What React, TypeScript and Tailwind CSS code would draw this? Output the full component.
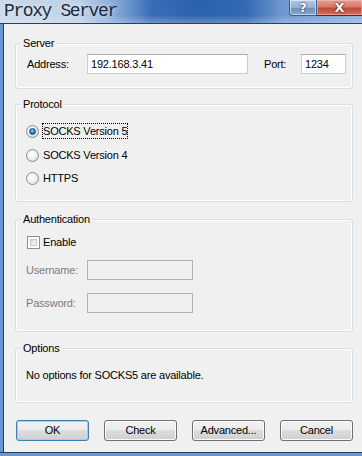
import React from "react";

const font = "font-['Liberation_Sans',Arial,sans-serif] text-[11px] tracking-[-0.2px]";

function Group({ title, className, children }: { title: string; className?: string; children: React.ReactNode }) {
  return (
    <div className={`relative rounded-[3px] border border-[#d5dfe5] shadow-[inset_0_0_0_1px_#ffffff] ${className ?? ""}`}>
      <span className="absolute -top-[7px] left-[5px] px-[2px] bg-[#f0f0f0] leading-[13px] text-[#000]">{title}</span>
      {children}
    </div>
  );
}

function Radio({ checked, label, focused }: { checked?: boolean; label: string; focused?: boolean }) {
  return (
    <div className="flex items-center h-[16px] ml-[10px]">
      <div className="w-[13px] h-[13px] rounded-full border border-[#8a8c8e] bg-[radial-gradient(circle_at_40%_40%,#ffffff_0%,#f4f4f4_40%,#cfd1d3_100%)] flex items-center justify-center">
        {checked && (
          <div className="w-[7px] h-[7px] rounded-full bg-[radial-gradient(circle_at_45%_35%,#8fd3ff_0%,#2f86d0_45%,#124f8c_100%)] border border-[#184c7c]" />
        )}
      </div>
      <div className={`ml-[3px] h-[16px] px-[1px] flex items-center ${focused ? "outline outline-1 outline-dotted outline-black -outline-offset-1" : ""}`}>
        <span className="leading-[13px]">{label}</span>
      </div>
    </div>
  );
}

function Button({ label, def }: { label: string; def?: boolean }) {
  return (
    <div
      className={`w-[73px] h-[21px] rounded-[3px] border flex items-center justify-center leading-[13px] bg-[linear-gradient(to_bottom,#f2f2f2_0%,#ebebeb_50%,#dddddd_50%,#cfcfcf_100%)] ${
        def
          ? "border-[#3c7fb1] shadow-[inset_0_0_0_1px_#8fd7f5]"
          : "border-[#707070] shadow-[inset_0_0_0_1px_#fcfcfc]"
      }`}
    >
      {label}
    </div>
  );
}

export default function App() {
  return (
    <div className={`w-[362px] h-[456px] flex flex-col overflow-hidden bg-[#6b98d2] text-black ${font}`}>
      {/* Title bar */}
      <div className="h-[23px] flex justify-between items-start bg-[linear-gradient(to_bottom,rgba(255,255,255,0)_65%,rgba(255,255,255,0.25)_100%),linear-gradient(to_right,#cad9ea_0%,#bdd0e6_22%,#7ba2d4_33%,#3a6db6_42%,#2c61ae_55%,#3369b3_68%,#6e98d0_78%,#8bb0dc_100%)]">
        <span className="pl-[4px] pt-[2px] font-['Liberation_Mono',monospace] text-[18px] tracking-[-1.4px] leading-[18px] text-[#1c2a3c] [text-shadow:0_0_6px_rgba(255,255,255,0.8)]">
          Proxy Server
        </span>
        <div className="flex">
          <div className="w-[28px] h-[16px] rounded-bl-[4px] border border-t-0 border-[#3e5f8c] shadow-[inset_0_0_0_1px_rgba(255,255,255,0.5)] bg-[linear-gradient(to_bottom,#b3c8e2_0%,#93afd3_50%,#6f8fbc_51%,#86a6d0_100%)] flex items-center justify-center font-['DejaVu_Sans',sans-serif] font-bold text-[13px] leading-[13px] text-white [text-shadow:0_0_1px_#243650,0_0_2px_#243650]">
            ?
          </div>
          <div className="w-[45px] h-[16px] border-b border-[#6b1e18] shadow-[inset_0_0_0_1px_rgba(255,200,190,0.5)] bg-[linear-gradient(to_bottom,#e3a195_0%,#d57a6b_45%,#c24a3a_55%,#d2705f_100%)] flex items-center justify-center font-['DejaVu_Sans',sans-serif] font-bold text-[13px] leading-[13px] text-white [text-shadow:0_0_1px_#3d0e0a,0_0_2px_#3d0e0a]">
            X
          </div>
        </div>
      </div>
      <div className="h-px bg-[#23406e]" />
      <div className="flex h-[428px]">
        <div className="w-[3px] bg-[#6b98d2]" />
        <div className="w-px bg-[#23406e]" />
        <div className="flex-1 bg-[#f0f0f0] pl-[11px] pr-[9px] flex flex-col">
          {/* Server */}
          <Group title="Server" className="mt-[19px]">
            <div className="flex items-center pt-[10px] pb-[14px] pl-[11px]">
              <span className="w-[60px] leading-[13px]">Address:</span>
              <div className="w-[161px] h-[20px] bg-white border border-[#c9ced6] border-t-[#abadb3] flex items-center pl-[3px] leading-[13px]">
                192.168.3.41
              </div>
              <span className="ml-[16px] w-[37px] leading-[13px]">Port:</span>
              <div className="w-[45px] h-[20px] bg-white border border-[#c9ced6] border-t-[#abadb3] flex items-center pl-[3px] leading-[13px]">
                1234
              </div>
            </div>
          </Group>

          {/* Protocol */}
          <Group title="Protocol" className="mt-[15px]">
            <div className="flex flex-col pt-[18px] pb-[15px]">
              <Radio checked focused label="SOCKS Version 5" />
              <div className="mt-[8px]">
                <Radio label="SOCKS Version 4" />
              </div>
              <div className="mt-[7px]">
                <Radio label="HTTPS" />
              </div>
            </div>
          </Group>

          {/* Authentication */}
          <Group title="Authentication" className="mt-[17px]">
            <div className="flex flex-col pt-[14px] pb-[18px]">
              <div className="flex items-center h-[16px] ml-[11px]">
                <div className="w-[13px] h-[13px] border border-[#8e8f8f] bg-white p-[2px]">
                  <div className="w-full h-full border border-[#c3c6cb] bg-[linear-gradient(135deg,#d3d5d8_0%,#eef0f2_60%,#f8f8f8_100%)]" />
                </div>
                <span className="ml-[3px] leading-[13px]">Enable</span>
              </div>
              <div className="flex items-center mt-[10px] ml-[10px]">
                <span className="w-[61px] leading-[13px] text-[#7c7c7c]">Username:</span>
                <div className="w-[106px] h-[20px] border border-[#adb2b5] bg-[#f0f0f0]" />
              </div>
              <div className="flex items-center mt-[13px] ml-[10px]">
                <span className="w-[61px] leading-[13px] text-[#7c7c7c]">Password:</span>
                <div className="w-[106px] h-[20px] border border-[#adb2b5] bg-[#f0f0f0]" />
              </div>
            </div>
          </Group>

          {/* Options */}
          <Group title="Options" className="mt-[16px]">
            <div className="pt-[20px] pb-[20px] pl-[10px] leading-[13px]">No options for SOCKS5 are available.</div>
          </Group>

          {/* Buttons */}
          <div className="mt-[17px] ml-[1px] flex justify-between">
            <Button label="OK" def />
            <Button label="Check" />
            <Button label="Advanced..." />
            <Button label="Cancel" />
          </div>
        </div>
      </div>
      <div className="h-px bg-[#23406e]" />
      <div className="h-[3px] bg-[#6b98d2]" />
    </div>
  );
}
